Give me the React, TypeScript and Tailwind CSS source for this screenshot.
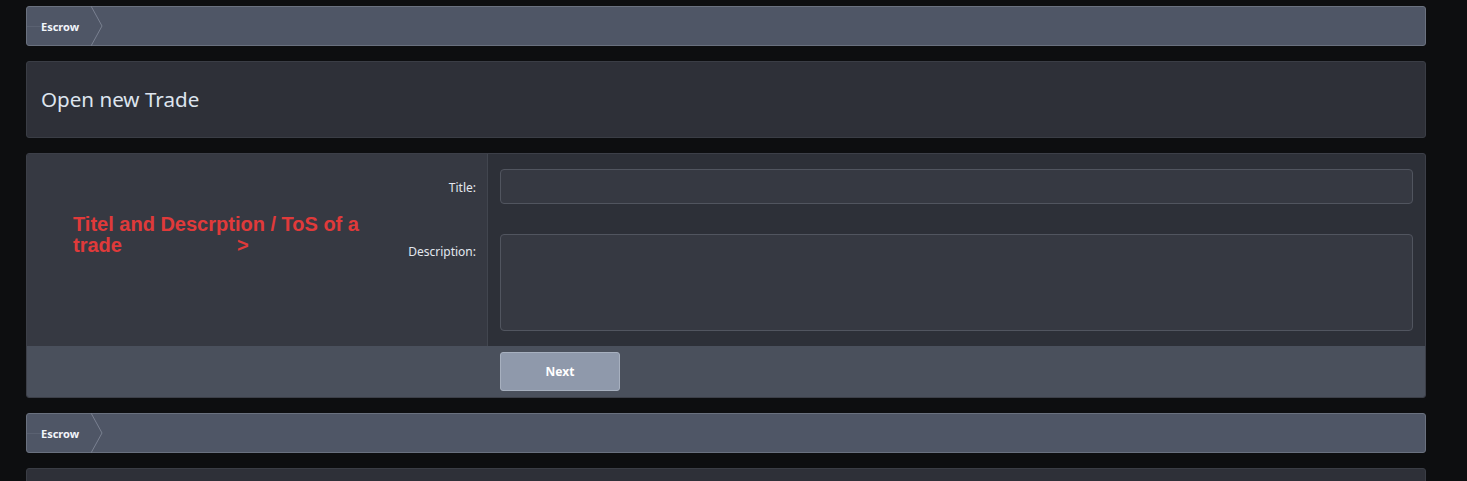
import React from "react";

const Breadcrumb = () => {
  return (
    <div className="flex h-[40px] items-stretch rounded-[3px] border border-[#6a717f] bg-[#4f5666]">
      {/* CRUMB */}
      <div className="relative flex items-center pl-[14px] pr-[12px] pt-[2px]">
        <div className="absolute left-0 right-[12px] top-1/2 h-px bg-[#5a6171]" />
        <span className="relative text-[11px] font-bold text-[#f2f5fa]">Escrow</span>
        <svg
          width="12"
          height="40"
          viewBox="0 0 12 40"
          className="absolute right-[-12px] top-[-1px]"
        >
          <path d="M0 0 L11 20 L0 40" fill="#4f5666" stroke="#7a8191" strokeWidth="1" />
        </svg>
      </div>
    </div>
  );
};

const App = () => {
  return (
    <div
      className="min-h-[481px] bg-[#0d0e10] pt-[6px]"
      style={{ fontFamily: '"Noto Sans", "Open Sans", sans-serif' }}
    >
      <div className="ml-[26px] flex w-[1400px] flex-col gap-[15px]">
        <Breadcrumb />

        {/* TITLE */}
        <div className="flex h-[77px] items-center rounded-[3px] border border-[#3a3d45] bg-[#2e3038] pl-[14px]">
          <h1 className="text-[20.6px] font-normal text-[#dde4ee]">Open new Trade</h1>
        </div>

        {/* FORM */}
        <div className="overflow-hidden rounded-[3px] border border-[#3c3f48] bg-[#2d3038]">
          <div className="flex">
            <div className="relative flex w-[461px] flex-col border-r border-[#42464f] bg-[#363942]">
              <div
                className="absolute left-[46px] top-[60px] w-[300px] text-[20px] font-bold leading-[21px] text-[#e03a3a]"
                style={{ fontFamily: '"Liberation Sans", Arial, sans-serif' }}
              >
                <p>Titel and Descrption / ToS of a</p>
                <p className="flex">
                  <span>trade</span>
                  <span className="ml-[115px]">&gt;</span>
                </p>
              </div>
              <div className="flex h-[65px] items-start justify-end pr-[11px] pt-[25px]">
                <span className="text-[12px] text-[#e3e8ef]">Title:</span>
              </div>
              <div className="flex h-[127px] items-start justify-end pr-[11px] pt-[24px]">
                <span className="text-[12px] text-[#e3e8ef]">Description:</span>
              </div>
            </div>
            <div className="flex flex-1 flex-col pl-[12px] pr-[12px] pt-[15px]">
              <input
                className="h-[35px] w-full rounded-[4px] border border-[#51555f] bg-[#363942] outline-none"
                type="text"
              />
              <textarea className="mt-[30px] h-[97px] w-full resize-none rounded-[4px] border border-[#51555f] bg-[#363942] outline-none" />
            </div>
          </div>
          <div className="flex h-[51px] items-center border-t border-[#4a505c] bg-[#4a505c] pl-[473px]">
            <button className="mb-[1px] h-[39px] w-[120px] rounded-[3px] border border-[#a7b0bf] bg-[#8f99ab] text-[12px] font-bold text-white">
              Next
            </button>
          </div>
        </div>

        <Breadcrumb />

        <div className="h-[40px] rounded-[3px] border border-[#3a3d45] bg-[#2e3038]" />
      </div>
    </div>
  );
};

export default App;
